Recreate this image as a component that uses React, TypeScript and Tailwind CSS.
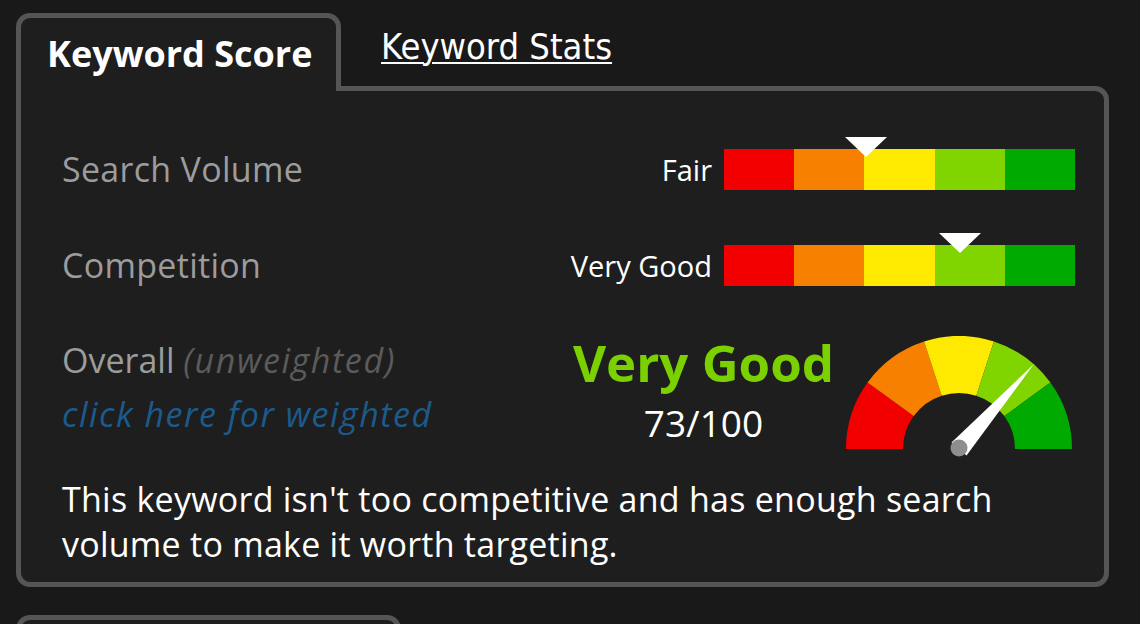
import React from "react";

const COLORS = ["#f20000", "#f88000", "#fdea00", "#80d400", "#00aa00"];

function Bar({ pos }: { pos: number }) {
  return (
    <div className="relative w-[351px] h-[41px] flex">
      {COLORS.map((c) => (
        <div key={c} className="flex-1 h-full" style={{ background: c }} />
      ))}
      <svg
        className="absolute top-[-12px]"
        style={{ left: `calc(${pos}% - 21px)` }}
        width="42"
        height="20"
        viewBox="0 0 42 20"
      >
        <polygon points="0,0 42,0 21,20" fill="#ffffff" />
      </svg>
    </div>
  );
}

function sector(a1: number, a2: number, R: number, r: number, cx: number, cy: number) {
  const rad = (a: number) => (a * Math.PI) / 180;
  const p = (rr: number, a: number) => [cx + rr * Math.cos(rad(a)), cy - rr * Math.sin(rad(a))];
  const [x1, y1] = p(R, a1);
  const [x2, y2] = p(R, a2);
  const [x3, y3] = p(r, a2);
  const [x4, y4] = p(r, a1);
  return `M${x1},${y1} A${R},${R} 0 0 1 ${x2},${y2} L${x3},${y3} A${r},${r} 0 0 0 ${x4},${y4} Z`;
}

function Gauge() {
  const cx = 113;
  const cy = 113;
  return (
    <svg width="226" height="124" viewBox="0 0 226 124">
      {COLORS.map((c, i) => (
        <path key={c} d={sector(180 - i * 36, 180 - (i + 1) * 36, 113, 56, cx, cy)} fill={c} />
      ))}
      <polygon points="188,28 120.5,119.6 105.5,106.4" fill="#ffffff" />
      <circle cx="113" cy="112" r="8.5" fill="#8e8e8e" />
    </svg>
  );
}

export default function App() {
  const font = { fontFamily: "'Open Sans', 'Noto Sans', sans-serif" };
  return (
    <div className="min-h-screen bg-[#191919] pt-[13px] pl-[16px] overflow-hidden" style={font}>
      <div className="w-[1093px]">
        <div className="flex items-start">
          <div className="relative z-10 w-[325px] h-[78px] -mb-[5px] bg-[#1e1e1e] border-[5px] border-b-0 border-[#555555] rounded-t-[14px] pl-[26px] pt-[16px]">
            <span className="text-white font-bold text-[36px] leading-[40px]">Keyword Score</span>
          </div>
          <a
            className="ml-[40px] mt-[12px] text-white underline underline-offset-[3px] decoration-[2px] text-[36px] leading-[44px]"
            style={{ fontFamily: "'Liberation Sans Narrow', 'DejaVu Sans Condensed', sans-serif" }}
          >
            Keyword Stats
          </a>
        </div>
        <div className="h-[501px] bg-[#1e1e1e] border-[5px] border-[#555555] rounded-b-[14px] rounded-tr-[14px] pl-[41px] pr-[29px] pt-[58px]">
          <div className="flex items-center h-[41px]">
            <div className="flex-1 text-[#9c9c9c] text-[34px] leading-[41px] tracking-[0.3px]">Search Volume</div>
            <div className="text-white text-[29px] mr-[12px]">Fair</div>
            <Bar pos={40.5} />
          </div>
          <div className="flex items-center h-[41px] mt-[55px]">
            <div className="flex-1 text-[#9c9c9c] text-[34px] leading-[41px] tracking-[0.3px]">Competition</div>
            <div className="text-white text-[29px] mr-[12px]">Very Good</div>
            <Bar pos={67.2} />
          </div>
          <div className="flex mt-[50px] h-[113px]">
            <div className="flex-1 pt-[4px]">
              <div className="text-[34px] leading-[40px] whitespace-nowrap">
                <span className="text-[#9c9c9c]">Overall</span>{" "}
                <span className="text-[#5b5b5b] italic tracking-[1.6px]">(unweighted)</span>
              </div>
              <div className="text-[#1c5a8c] italic text-[34px] leading-[40px] mt-[14px] tracking-[1.5px] whitespace-nowrap">
                click here for weighted
              </div>
            </div>
            <div className="flex flex-col items-center mr-[12px]">
              <div className="text-[#7bd000] font-bold text-[51px] leading-[56px] -mt-[2px] whitespace-nowrap">Very Good</div>
              <div className="text-white text-[37px] leading-[44px] mt-[11px]">73/100</div>
            </div>
            <div className="mr-[3px]">
              <Gauge />
            </div>
          </div>
          <p className="text-white text-[34px] leading-[45px] tracking-[0.25px] mt-[28px] whitespace-nowrap">
            This keyword isn't too competitive and has enough search
            <br />
            volume to make it worth targeting.
          </p>
        </div>
        <div className="mt-[28px] w-[385px] h-[30px] border-[5px] border-b-0 border-[#555555] rounded-t-[14px] bg-[#1e1e1e]" />
      </div>
    </div>
  );
}
